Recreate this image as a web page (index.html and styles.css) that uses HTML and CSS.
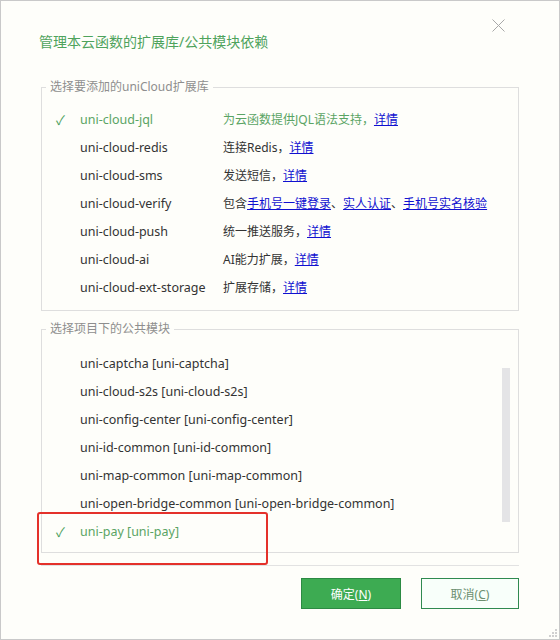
FILE: index.html
```html
<!DOCTYPE html>
<html lang="zh-CN">
<head>
  <meta charset="UTF-8">
  <title>管理本云函数的扩展库/公共模块依赖</title>
  <link rel="stylesheet" href="styles.css">
</head>
<body>
  <div class="dialog">
    <div class="dialog-header">
      <h2 class="dialog-title">管理本云函数的扩展库/公共模块依赖</h2>
      <svg class="close" width="13" height="13" viewBox="0 0 13 13">
        <path d="M0.5 0.5 L12.5 12.5 M12.5 0.5 L0.5 12.5" stroke="#a8a8a8" stroke-width="1" fill="none"/>
      </svg>
    </div>

    <fieldset class="group">
      <legend>选择要添加的uniCloud扩展库</legend>
      <div class="row checked">
        <span class="check">✓</span>
        <span class="name">uni-cloud-jql</span>
        <span class="desc">为云函数提供JQL语法支持，<a href="#">详情</a></span>
      </div>
      <div class="row">
        <span class="check"></span>
        <span class="name">uni-cloud-redis</span>
        <span class="desc">连接Redis，<a href="#">详情</a></span>
      </div>
      <div class="row">
        <span class="check"></span>
        <span class="name">uni-cloud-sms</span>
        <span class="desc">发送短信，<a href="#">详情</a></span>
      </div>
      <div class="row">
        <span class="check"></span>
        <span class="name">uni-cloud-verify</span>
        <span class="desc">包含<a href="#">手机号一键登录</a>、<a href="#">实人认证</a>、<a href="#">手机号实名核验</a></span>
      </div>
      <div class="row">
        <span class="check"></span>
        <span class="name">uni-cloud-push</span>
        <span class="desc">统一推送服务，<a href="#">详情</a></span>
      </div>
      <div class="row">
        <span class="check"></span>
        <span class="name">uni-cloud-ai</span>
        <span class="desc">AI能力扩展，<a href="#">详情</a></span>
      </div>
      <div class="row">
        <span class="check"></span>
        <span class="name">uni-cloud-ext-storage</span>
        <span class="desc">扩展存储，<a href="#">详情</a></span>
      </div>
    </fieldset>

    <fieldset class="group modules">
      <legend>选择项目下的公共模块</legend>
      <div class="module-list">
        <div class="list">
          <div class="row"><span class="check"></span><span class="name">uni-captcha [uni-captcha]</span></div>
          <div class="row"><span class="check"></span><span class="name">uni-cloud-s2s [uni-cloud-s2s]</span></div>
          <div class="row"><span class="check"></span><span class="name">uni-config-center [uni-config-center]</span></div>
          <div class="row"><span class="check"></span><span class="name">uni-id-common [uni-id-common]</span></div>
          <div class="row"><span class="check"></span><span class="name">uni-map-common [uni-map-common]</span></div>
          <div class="row"><span class="check"></span><span class="name">uni-open-bridge-common [uni-open-bridge-common]</span></div>
          <div class="row checked"><span class="check">✓</span><span class="name">uni-pay [uni-pay]</span></div>
        </div>
        <div class="scrollbar"><div class="thumb"></div></div>
      </div>
    </fieldset>

    <div class="separator"></div>

    <div class="actions">
      <button class="btn primary">确定(<u>N</u>)</button>
      <button class="btn">取消(<u>C</u>)</button>
    </div>

    <div class="highlight"></div>

    <svg class="grip" width="8" height="8" viewBox="0 0 8 8">
      <rect x="6" y="0" width="2" height="2" fill="#d0d0d0"/>
      <rect x="3" y="3" width="2" height="2" fill="#d0d0d0"/>
      <rect x="6" y="3" width="2" height="2" fill="#d0d0d0"/>
      <rect x="0" y="6" width="2" height="2" fill="#d0d0d0"/>
      <rect x="3" y="6" width="2" height="2" fill="#d0d0d0"/>
      <rect x="6" y="6" width="2" height="2" fill="#d0d0d0"/>
    </svg>
  </div>
</body>
</html>
```

FILE: styles.css
```css
* { box-sizing: border-box; }
body {
  margin: 0;
  font-family: "Noto Sans", "Noto Sans CJK SC", sans-serif;
  font-size: 12px;
  color: #333;
}
.dialog {
  position: relative;
  width: 560px;
  height: 640px;
  background: #fefefa;
  border: 1px solid #c9c9c9;
}
.dialog-header {
  position: relative;
  height: 78px;
  padding: 31px 0 0 38px;
}
.dialog-title {
  margin: 0;
  font-size: 14px;
  font-weight: normal;
  line-height: 20px;
  color: #4ea35c;
}
.close {
  position: absolute;
  top: 18px;
  right: 54px;
}
.group {
  margin: 0 40px 10px 40px;
  padding: 10px 0 9px 0;
  border: 1px solid #dedede;
}
.group legend {
  margin-left: 4px;
  padding: 0 4px;
  line-height: 16px;
  color: #8e8e8e;
}
.row {
  display: flex;
  align-items: center;
  height: 28px;
  white-space: nowrap;
}
.check {
  width: 38px;
  padding-left: 14px;
  color: #4c9e5b;
  font-size: 13px;
}
.name {
  width: 143px;
  font-size: 12.5px;
}
.desc a {
  color: #1010d0;
}
.checked .name,
.checked .desc {
  color: #5aa464;
}
.modules {
  padding: 12px 0 7px 0;
  margin-bottom: 12px;
}
.module-list {
  display: flex;
}
.list { flex: 1; }
.list .name { width: auto; }
.scrollbar {
  width: 8px;
  margin-right: 8px;
}
.thumb {
  margin-top: 19px;
  height: 154px;
  background: #e4e4e6;
}
.separator {
  margin: 0 40px;
  height: 1px;
  background: #e2e2e2;
}
.actions {
  display: flex;
  justify-content: flex-end;
  gap: 20px;
  margin: 12px 40px 0 0;
}
.btn {
  width: 98px;
  height: 31px;
  font-family: inherit;
  font-size: 12px;
  color: #6c8f70;
  background: #f8fffa;
  border: 1px solid #2f8a50;
}
.btn.primary {
  width: 100px;
  color: #fff;
  background: #3dab52;
  border-color: #2c8a43;
}
.highlight {
  position: absolute;
  left: 36px;
  top: 511px;
  width: 231px;
  height: 53px;
  border: 2px solid #e4312a;
  border-radius: 3px;
}
.grip {
  position: absolute;
  right: 2px;
  bottom: 2px;
}
```
